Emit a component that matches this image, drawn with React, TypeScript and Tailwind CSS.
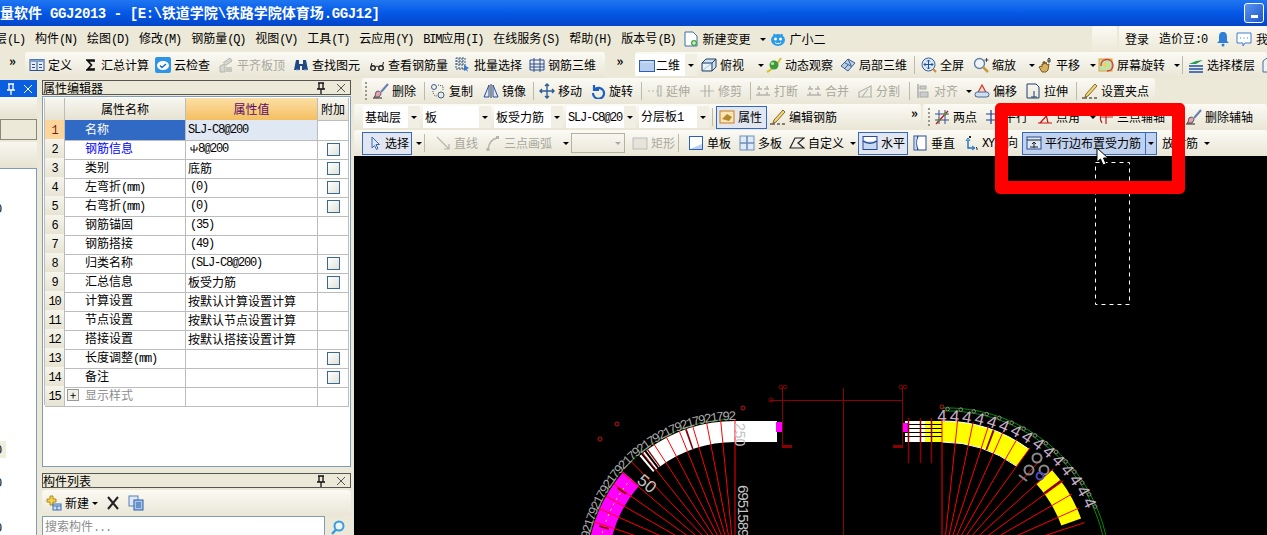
import type { ReactNode } from "react";

const S = ({ children }: { children: ReactNode }) => (
  <svg viewBox="0 0 16 16" className="h-4 w-4 shrink-0" fill="none">
    {children}
  </svg>
);

function T({ s, latin = "tracking-[-0.1em]" }: { s: string; latin?: string }) {
  return (
    <>
      {s.split(/([\x00-\xff]+)/).map((p, i) =>
        i % 2 ? (
          <span key={i} className={`font-['Liberation_Mono',monospace] ${latin}`}>
            {p}
          </span>
        ) : (
          p
        ),
      )}
    </>
  );
}

const icons: Record<string, ReactNode> = {
  define: <><rect x="1" y="2.500" width="14" height="11" fill="#e4ecf7" stroke="#2c4f86" /><rect x="1" y="2.500" width="14" height="2.500" fill="#7f9fd0" /><path d="M8 5v8M3 7.500h3M3 10.500h3M10 7.500h3M10 10.500h3" stroke="#2c4f86" /></>,
  sigma: <path d="M4 3h8v2M11 4H6l3.500 4L6 12h5M12 11v2H4" stroke="#111" strokeWidth="1.700" />,
  cloud: <><rect x="0" y="0" width="16" height="16" rx="2" fill="#2f93e6" /><ellipse cx="8" cy="8.500" rx="6" ry="4.500" fill="#fff" /><path d="M5 8.500l2 2 4-3.500" stroke="#1c6fc4" strokeWidth="1.500" /></>,
  flush: <><path d="M2 15V9l5-2v8zM5 6l7-5 2 3-6 4" fill="#d6d6ce" stroke="#b5b5ad" /><path d="M8 15V10h6v5z" fill="#c8c8c0" /></>,
  binoc: <><path d="M3 3h3v4h4V3h3l2 10H9V9H7v4H1z" fill="#1f4a86" /><path d="M3 13h3M11 13h3" stroke="#8fb2e0" /></>,
  glasses: <><circle cx="4" cy="11" r="2.300" stroke="#222" strokeWidth="1.400" /><circle cx="12" cy="11" r="2.300" stroke="#222" strokeWidth="1.400" /><path d="M6.500 10c1-1 2-1 3 0M13.500 9l1-4M2 9l1-3" stroke="#222" /></>,
  batch: <><path d="M1 1h9v11H1zM1 4h9M1 7h9M4 1v11M7 1v11" stroke="#35547f" strokeDasharray="2 1" /><path d="M9 8l5 3-2 1 1 3-2-2-2 1z" fill="#3a78c8" /></>,
  grid3d: <path d="M1 3h14v10H1zM5 1v14M11 1v14M1 7h14M1 10h14" stroke="#2a4d96" />,
  rect2d: <><rect x="0.500" y="3.500" width="15" height="11" fill="#b6cdf0" stroke="#2e5fb0" /><path d="M2 5h12" stroke="#dfe9f8" /></>,
  box: <><path d="M1 6l4-4h10v8l-4 4H1z" fill="#cfe2f3" stroke="#25405f" /><path d="M1 6h10v8M11 6l4-4" stroke="#25405f" /><path d="M2 7h8v6H2z" fill="#eaf3fa" /><path d="M2 13l8-6" stroke="#9fc0de" /></>,
  orbit: <><path d="M1 15C5 13 12 7 15 1" stroke="#d8c03a" strokeWidth="2" /><circle cx="8" cy="8" r="4.500" fill="#3f9b3a" /><circle cx="6.500" cy="6.500" r="1.600" fill="#b7e6a8" /></>,
  local3d: <><path d="M1 9l7-7 7 4-7 8z" fill="#b9cfe8" stroke="#3f5f8d" /><path d="M4.500 5.500l7 4M8 2l3.500 7.500M4.500 11.500L8 8" stroke="#3f5f8d" /></>,
  full: <><circle cx="7.500" cy="7.500" r="6.500" fill="#dce8f6" stroke="#3c5f8a" /><path d="M7.500 3v9M3 7.500h9" stroke="#1c4fa0" /><path d="M6 4.500l1.500-1.500 1.500 1.500M6 10.500l1.500 1.500 1.500-1.500M4.500 6L3 7.500 4.500 9M10.500 6L12 7.500 10.500 9" stroke="#1c4fa0" /><path d="M12 12l3 3" stroke="#c88a30" strokeWidth="2" /></>,
  zoom: <><circle cx="6.500" cy="6.500" r="5" fill="#eef3fa" stroke="#5f7fa8" strokeWidth="1.400" /><path d="M10 10l5 5" stroke="#c89a3a" strokeWidth="2.500" /><path d="M13.500 1v4M11.500 3h4" stroke="#444" /></>,
  hand: <><path d="M2 10l2-1 1 1V7l1 1V5l1 2V4l1 3 1-2 1 3 2-1-1 6-2 2H5z" fill="#d8b060" stroke="#7a5a20" /><path d="M12 1v5M10.500 2.500L12 1l1.500 1.500M10 4h4" stroke="#333" /></>,
  screen: <><rect x="1" y="2" width="13" height="12" fill="#bfe3b0" stroke="#d9a030" /><path d="M3 9c-1-8 11-9 12-1 0 4-3 6-6 6" stroke="#e23a32" strokeWidth="1.400" /><circle cx="7" cy="8" r="2" fill="#f5d24a" /></>,
  floors: <><path d="M1 7l7-3 7-1-7 4z" fill="#2a9b52" /><path d="M1 9h14M1 12h14M1 15h14" stroke="#1c4fa0" strokeWidth="1.500" /></>,
  tile: <path d="M1 4l4-3h9v10l-4 4H1z" fill="#eef3f8" stroke="#4a6a90" />,
  brush: <><path d="M15 1L8 9" stroke="#6a7fb0" strokeWidth="2" /><path d="M3 9c3-2 5 0 5 2l-2 3H1c2-1 1-3 2-5z" fill="#e8a0b8" stroke="#555" /><path d="M0 15h9" stroke="#222" /></>,
  copy: <><circle cx="4" cy="4" r="2.500" stroke="#3a5f90" /><circle cx="11" cy="12" r="3" stroke="#3a5f90" /><path d="M8 2l5 1 0 4M3 8c0 3 1 5 4 5" stroke="#555" strokeDasharray="1 1" /></>,
  mirror: <><path d="M8 1v14" stroke="#333" /><path d="M6 2v12H1z" fill="#dfe8f8" stroke="#2a4d96" /><path d="M10 2v12h5z" fill="#dfe8f8" stroke="#2a4d96" /></>,
  move: <path d="M8 1v14M1 8h14M6 3l2-2 2 2M6 13l2 2 2-2M3 6L1 8l2 2M13 6l2 2-2 2" stroke="#2e5d96" strokeWidth="1.400" />,
  rotate: <path d="M4 2v5h5M4.500 6.500A5.500 5.500 0 1 1 3 10" stroke="#1c5fc0" strokeWidth="2.200" />,
  extend: <path d="M1 8h2M5 8h2M9 8h2M11 3h3v10h-3z" stroke="#b5b5ad" strokeWidth="1.200" />,
  trim: <path d="M1 8h14M6 2v12M10 2v12" stroke="#b5b5ad" strokeWidth="1.200" />,
  cut: <path d="M2 6h5M9 6h5M1 12h14M4 3v3M12 3v3M4 9v3M12 9v3" stroke="#b5b5ad" strokeWidth="1.500" />,
  split: <path d="M1 14h14M2 14V9l12-6v11M5 14l6-8" stroke="#b5b5ad" strokeWidth="1.200" />,
  align: <><path d="M3 1v14" stroke="#aaa" strokeWidth="1.500" /><rect x="5" y="3" width="6" height="3" fill="#ccc" stroke="#aaa" /><rect x="5" y="9" width="8" height="5" fill="#ccc" stroke="#aaa" /></>,
  offset: <><path d="M8 2l6 11H2z" fill="#f4d8d0" stroke="#d23b2e" strokeWidth="1.300" /><rect x="1" y="9" width="14" height="5" rx="2.500" fill="#cfdff0" stroke="#476a98" /></>,
  stretch: <path d="M2 1h9l3 3v11H2zM9 8v6M6 14h6" stroke="#1f3f70" />,
  pen: <><path d="M4 11L13 1l2 2-9 10-3 1z" fill="#f0d680" stroke="#8a6a20" /><path d="M0 15h5M7 15h3M12 15h3" stroke="#111" /></>,
  attr: <><rect x="1" y="2" width="14" height="12" fill="#fde4b4" stroke="#c87f20" /><path d="M3 10l5-5 5 3-3 4z" fill="#b08a30" /></>,
  two: <><path d="M5 1v14M11 1v14M1 5h14M1 11h14" stroke="#3a4f90" /><path d="M2 15L14 2" stroke="#d01010" strokeWidth="1.300" /><circle cx="5" cy="11" r="1.500" fill="#3a9b3a" /><circle cx="11" cy="5" r="1.500" fill="#3a9b3a" /></>,
  par: <path d="M1 5h14M1 11h14M6 1v14" stroke="#1f3f90" strokeWidth="1.200" />,
  angle: <path d="M1 14h14M3 14L14 2M9 5l2 9" stroke="#d01010" strokeWidth="1.200" />,
  three: <path d="M8 1v14M2 8h13M4 4c-2 3-2 7 0 10" stroke="#c01818" strokeWidth="1.200" />,
  cursor: <path d="M5 2v11l2.500-2.500 2 4 1.500-1-2-4h3.500z" fill="#dfe8f8" stroke="#3a66b0" />,
  line: <path d="M2 2l12 12M14 9v5H9" stroke="#b5b5ad" strokeWidth="1.200" />,
  arc: <><path d="M3 14C4 8 7 4 12 3" stroke="#b5b5ad" strokeWidth="1.500" /><rect x="11" y="1" width="3" height="3" fill="#b5b5ad" /><rect x="1.500" y="13" width="3" height="3" fill="#b5b5ad" /></>,
  rectGrey: <rect x="1" y="3" width="14" height="11" fill="#e6e4d8" stroke="#bbb" />,
  single: <><rect x="1.500" y="1.500" width="13" height="13" fill="#fff" stroke="#2e5fb0" /><path d="M2 14h12V9z" fill="#b9cff0" /></>,
  multi: <><rect x="1" y="1" width="14" height="14" fill="#dfeaf8" stroke="#6f8fb8" /><path d="M8 1v14M1 8h14" stroke="#6f8fb8" strokeWidth="1.600" /></>,
  custom: <path d="M1 13L6 3h9L9 8l6 5z" stroke="#222" strokeWidth="1.200" />,
  horiz: <><rect x="1" y="1.500" width="14" height="13" fill="#c9d9f0" stroke="#2a4d96" /><path d="M1 6c4 3 10 3 14 0" stroke="#2a4d96" strokeWidth="1.500" /><path d="M2 2h12v3c-4 2-8 2-12 0z" fill="#fff" /></>,
  vert: <><rect x="2" y="1" width="12" height="14" fill="#fff" stroke="#2a4d96" /><path d="M6 1c-2 4-2 10 0 14" stroke="#2a4d96" strokeWidth="1.500" /><path d="M3 2h2c-1 4-1 8 0 12H3z" fill="#c9d9f0" /></>,
  xy: <><path d="M5 5v8h6" stroke="#1c6fc4" strokeWidth="1.400" /><path d="M3 6l2-3 2 3M9 11l3 2-3 2" stroke="#1c6fc4" /><path d="M6 1l2 2M8 1L6 3M13 12l1 1v2" stroke="#222" /></>,
  parallel: <><rect x="1" y="2" width="14" height="12" fill="#dce8f6" stroke="#2a4d96" /><path d="M1 5h14M8 13V7M6 9l2-2 2 2M4 12h8" stroke="#222" /></>,
  file: <><path d="M2 1h8l4 4v10H2z" fill="#fff" stroke="#3a6fb0" /><circle cx="11" cy="12" r="3" fill="#3da63d" /><path d="M11 10v4M9 12h4" stroke="#fff" /></>,
  robot: <><ellipse cx="8" cy="9" rx="7" ry="6" fill="#2c9be8" /><path d="M4 3l1 3M12 3l-1 3" stroke="#2c9be8" strokeWidth="2" /><circle cx="5.500" cy="8" r="1.500" fill="#fff" /><circle cx="10.500" cy="8" r="1.500" fill="#fff" /><path d="M5 11.500c2 1.500 4 1.500 6 0" stroke="#fff" /></>,
  bell: <><path d="M8 1c3 0 4 2 4 5v4l2 2H2l2-2V6c0-3 1-5 4-5z" fill="#2f7fd8" /><circle cx="8" cy="14" r="1.500" fill="#2f7fd8" /></>,
  chat: <><path d="M1 2h14v10H9l-2 3v-3H1z" fill="#fff" stroke="#3a7fd0" /><path d="M4 7h1M7.500 7h1M11 7h1" stroke="#3a7fd0" /></>,
  newItem: <><path d="M4 1h3v3h3v3H7v3H4V7H1V4h3z" fill="#f5d24a" stroke="#b08a20" /><rect x="7" y="9" width="8" height="6" fill="#cfe0f5" stroke="#3a6fb0" /><path d="M7 11h8M11 11v4" stroke="#3a6fb0" /></>,
  paste: <><rect x="1" y="1" width="9" height="10" fill="#dfe8f8" stroke="#5a80b8" /><rect x="6" y="5" width="9" height="10" fill="#a8c4ec" stroke="#2a5fa8" /><path d="M8 8h5M8 10h5M8 12h5" stroke="#2a5fa8" /></>,
};

function Caret() {
  return <span className="ml-auto mr-[2px] h-0 w-0 shrink-0 border-x-[3px] border-t-[3px] border-x-transparent border-t-black" />;
}

function Tool({ icon, label, w, off, caret }: { icon: string; label: string; w: string; off?: boolean; caret?: boolean }) {
  return (
    <div className={`flex h-full shrink-0 items-center gap-[3px] whitespace-nowrap ${w} ${off ? "text-[#a9a89c]" : "text-black"}`}>
      <S>{icons[icon]}</S>
      <span><T s={label} /></span>
      {caret && <Caret />}
    </div>
  );
}

function Sep({ w }: { w: string }) {
  return (
    <div className={`flex h-full shrink-0 items-center ${w}`}>
      <div className="h-[18px] w-px bg-[#bdbaa8]" />
    </div>
  );
}

const Grip = ({ w }: { w: string }) => (
  <div className={`flex shrink-0 flex-col gap-[2px] ${w}`}>
    {[0, 1, 2, 3, 4].map((i) => <div key={i} className="h-[2px] w-[2px] bg-[#9b9886]" />)}
  </div>
);

function Combo({ label, w }: { label: string; w: string }) {
  return (
    <div className={`flex h-[22px] shrink-0 items-center overflow-hidden whitespace-nowrap bg-white pl-[2px] ${w}`}>
      <span className="min-w-0 flex-1 overflow-hidden"><T s={label} /></span>
      <span className="flex h-full w-[12px] shrink-0 items-center justify-center bg-[#f1efe4]">
        <span className="h-0 w-0 border-x-[3px] border-t-[3px] border-x-transparent border-t-black" />
      </span>
    </div>
  );
}

const band = "flex items-center rounded-[3px] bg-linear-to-b from-[#fbfaf4] to-[#e9e6d6]";

function Chevron() {
  return <span className="-translate-y-[5px] text-[13px] font-bold leading-none text-black">»</span>;
}

function PanelHead({ title, w }: { title: string; w: string }) {
  return (
    <div className={`flex h-[15px] shrink-0 items-center border border-[#555] bg-[#ece9d8] ${w}`}>
      <span className="leading-none"><T s={title} /></span>
      <svg viewBox="0 0 12 12" className="ml-auto mr-[9px] h-3 w-3"><path d="M3 1h6M4 1v6h4V1M2 7h8M6 7v5" stroke="#111" strokeWidth="1.300" fill="none" /></svg>
      <svg viewBox="0 0 10 10" className="mr-[4px] h-[10px] w-[10px]"><path d="M1 1l8 8M9 1l-8 8" stroke="#555" fill="none" /></svg>
    </div>
  );
}

const rows: [string, string, boolean][] = [
  ["名称", "SLJ-C8@200", false],
  ["钢筋信息", "8@200", true],
  ["类别", "底筋", true],
  ["左弯折(mm)", "(0)", true],
  ["右弯折(mm)", "(0)", true],
  ["钢筋锚固", "(35)", false],
  ["钢筋搭接", "(49)", false],
  ["归类名称", "(SLJ-C8@200)", true],
  ["汇总信息", "板受力筋", true],
  ["计算设置", "按默认计算设置计算", false],
  ["节点设置", "按默认节点设置计算", false],
  ["搭接设置", "按默认搭接设置计算", false],
  ["长度调整(mm)", "", true],
  ["备注", "", true],
  ["显示样式", "", false],
];

function PropTable() {
  return (
    <div className="ml-px mt-px w-[305px] border-l border-[#bcbcbc]">
      <div className="grid h-[22px] grid-cols-[20px_121px_132px_31px] text-center leading-[22px]">
        <div className="border-b border-r border-[#bcbcbc] bg-linear-to-b from-[#f8f7f0] to-[#e6e3d2]" />
        <div className="border-b border-r border-[#bcbcbc] bg-linear-to-b from-[#f8f7f0] to-[#e6e3d2]">属性名称</div>
        <div className="border-b border-r border-[#bcbcbc] bg-linear-to-b from-[#fbdfa4] to-[#f4bf5f] text-[#5b0a6b]">属性值</div>
        <div className="border-b border-r border-[#bcbcbc] bg-linear-to-b from-[#f8f7f0] to-[#e6e3d2]">附加</div>
      </div>
      {rows.map(([name, val, check], i) => (
        <div key={name} className="grid h-[19px] grid-cols-[20px_121px_132px_31px] leading-[18px]">
          <div className={`border-b border-r border-[#bcbcbc] text-center ${i === 0 ? "bg-[#fdd49a] text-[#7a1a1a]" : "bg-linear-to-b from-[#f6f5ec] to-[#e6e3d2]"}`}>
            <T s={String(i + 1)} />
          </div>
          <div className={`relative border-b border-r border-[#bcbcbc] pl-[20px] ${i === 0 ? "bg-[#316ac5] text-white" : i === 1 ? "text-[#0000ff]" : i === 14 ? "text-[#8d8d8d]" : ""}`}>
            {i === 14 && (
              <span className="absolute left-[2px] top-[3px] flex h-[12px] w-[12px] items-center justify-center border border-[#999] bg-[#f0efe6] text-[11px] leading-none text-black">+</span>
            )}
            <T s={name} />
          </div>
          <div className={`flex items-center whitespace-pre border-b border-r border-[#bcbcbc] ${val.startsWith("(") ? "pl-[4px]" : "pl-[2px]"} ${i === 0 ? "bg-[#e0e8f4]" : ""}`}>
            {i === 1 && (
              <svg viewBox="0 0 8 10" className="ml-[2px] h-[10px] w-[8px]"><path d="M1 3v3h6V3M4 1v8" stroke="#111" fill="none" /></svg>
            )}
            <T s={val} />
          </div>
          <div className="flex items-center justify-center border-b border-r border-[#bcbcbc]">
            {check && <div className="h-[13px] w-[13px] border border-[#3b6a8f] bg-linear-to-br from-white to-[#e2e2da]" />}
          </div>
        </div>
      ))}
    </div>
  );
}

function polar(cx: number, cy: number, r: number, deg: number) {
  const a = (deg * Math.PI) / 180;
  return [cx + r * Math.sin(a), cy - r * Math.cos(a)];
}

function arc(cx: number, cy: number, r: number, a: number, b: number) {
  const [x1, y1] = polar(cx, cy, r, a);
  const [x2, y2] = polar(cx, cy, r, b);
  return `M${x1} ${y1}A${r} ${r} 0 0 ${b > a ? 1 : 0} ${x2} ${y2}`;
}

const range = (from: number, to: number, step: number) => {
  const out: number[] = [];
  for (let v = from; step > 0 ? v <= to : v >= to; v += step) out.push(v);
  return out;
};

function Radials({ cx, angles }: { cx: number; angles: number[] }) {
  return (
    <>
      {angles.map((d) => {
        const [x1, y1] = polar(cx, 569, 150, d);
        const [x2, y2] = polar(cx, 569, 20, d);
        return <line key={d} x1={x1} y1={y1} x2={x2} y2={y2} stroke="#ff0000" />;
      })}
    </>
  );
}

// the outer rings on the right drift outward a little as they go round
const drift = (d: number, base: number, k: number) => polar(942, 569, base + d * k, d);

function Drawing() {
  const cl = 735;
  const cr = 942;
  const green = (base: number) =>
    "M" + range(0, 82, 2).map((d) => drift(d, base, 0.08).join(" ")).join("L");
  return (
    <svg viewBox="354 156 913 379" className="h-full w-full">
      <rect x="1095.5" y="162.5" width="34" height="142" fill="none" stroke="#fff" strokeDasharray="4 4" />

      {/* centre grid */}
      <g stroke="#8b0000" fill="none">
        <path d="M782.5 388v59M902.5 388v59M843.5 388V535M770 400.5H902" />
        <circle cx="781" cy="387" r="1.800" />
        <circle cx="785" cy="387" r="1.800" />
        <circle cx="901" cy="387" r="1.800" />
        <circle cx="905" cy="387" r="1.800" />
        <circle cx="771" cy="400" r="2" />
        <path d="M782 446.5h10M893 446.5h10" strokeWidth="3" />
        <circle cx="600" cy="439" r="2" stroke="#d01010" />
        <circle cx="617" cy="424" r="2" stroke="#d01010" />
        <circle cx="743" cy="408" r="2" stroke="#d01010" />
        <circle cx="942" cy="407" r="2" stroke="#d01010" />
      </g>

      {/* left arc */}
      <rect x="735" y="421" width="42" height="21" fill="#fff" />
      <rect x="776" y="422" width="6" height="10" fill="#ff00ff" />
      <path d={arc(cl, 569, 137.5, 0, -36)} stroke="#fff" strokeWidth="21" fill="none" />
      <path d={arc(cl, 569, 137.5, -36, -41)} stroke="#fff" strokeWidth="21" strokeDasharray="2 2" fill="none" />
      <path d={arc(cl, 569, 137.5, -49, -85)} stroke="#ff00ff" strokeWidth="21" fill="none" />
      <path d={arc(cl, 569, 137.5, -49, -85)} stroke="#ffff00" strokeDasharray="2 4" fill="none" />
      <Radials cx={cl} angles={range(0, -88, -5.5)} />
      <path d={arc(cl, 569, 137.5, -19, -19.7)} stroke="#8b0000" strokeWidth="21" fill="none" />
      <path d={arc(cl, 569, 137.5, -36, -36.5)} stroke="#8b0000" strokeWidth="21" fill="none" />
      <path d={arc(cl, 569, 137.5, -55, -55.8)} stroke="#8b0000" strokeWidth="10" fill="none" />
      <path d={arc(cl, 569, 137.5, -72, -72.8)} stroke="#8b0000" strokeWidth="10" fill="none" />
      <path d={arc(cl, 569, 150, -2, -85)} stroke="#007000" fill="none" />
      <g fill="#a8a8a8" fontSize="13" fontFamily="'Liberation Mono',monospace">
        {range(-1, -86, -2.3).map((d, i) => {
          const [x, y] = polar(cl, 569, 149, d);
          return <text key={d} x={x} y={y} textAnchor="middle" transform={`rotate(${d} ${x} ${y})`}>{"2971"[i % 4]}</text>;
        })}
      </g>
      <g fill="#c4c4c4" fontFamily="'Liberation Sans',sans-serif">
        <text x="735" y="423" fontSize="14" transform="rotate(90 735 423)">250</text>
        <text x="738" y="485" fontSize="15" letterSpacing="-1" transform="rotate(90 738 485)">6951589</text>
        <text x="636" y="482" fontSize="17" transform="rotate(40 636 482)">50</text>
      </g>

      {/* right arc */}
      <rect x="905" y="421" width="37" height="21" fill="#fff" />
      <rect x="925" y="421" width="17" height="21" fill="#ffff00" />
      <path d="M905 424.5h37M905 428.5h37M905 432.5h37M905 436.5h37" stroke="#000" />
      <rect x="903" y="423" width="6" height="9" fill="#ff00ff" />
      <path d="M908.5 418v45M920.5 418v45M931.5 418v45" stroke="#8b0000" strokeWidth="1.500" />
      <path d={arc(cr, 569, 137.5, 0, 36)} stroke="#ffff00" strokeWidth="21" fill="none" />
      <path d={arc(cr, 569, 137.5, 48, 70)} stroke="#ffff00" strokeWidth="21" fill="none" />
      <path d={arc(cr, 569, 148, 0, 36)} stroke="#fff" fill="none" />
      <path d={arc(cr, 569, 127, 0, 36)} stroke="#fff" fill="none" />
      <Radials cx={cr} angles={range(0, 80, 6)} />
      <path d={arc(cr, 569, 137.5, 20, 20.8)} stroke="#8b0000" strokeWidth="21" fill="none" />
      <path d={arc(cr, 569, 137.5, 53, 54)} stroke="#8b0000" strokeWidth="21" fill="none" />
      <path d={green(158)} stroke="#009000" fill="none" />
      <path d={green(161)} stroke="#009000" fill="none" />
      <g fill="#c8aecb" fontSize="17" fontFamily="'Liberation Sans',sans-serif">
        {range(0, 66, 4.7).map((d) => {
          const [x, y] = drift(d, 147, 0.14);
          return <text key={d} x={x} y={y} textAnchor="middle" transform={`rotate(${d} ${x} ${y})`}>4</text>;
        })}
      </g>
      <g stroke="#888" fill="none">
        {range(2, 72, 4.7).map((d) => {
          const [x, y] = drift(d, 160, 0.08);
          return <circle key={d} cx={x} cy={y} r="1.800" />;
        })}
      </g>
      <g fill="none" stroke="#8a8a8a" strokeWidth="2">
        <circle cx="1037" cy="458" r="4.500" />
        <circle cx="1029" cy="470" r="4.500" />
        <circle cx="1044" cy="470" r="4.500" />
        <circle cx="1040" cy="476" r="3.500" stroke="#4a4ac0" />
        <path d="M1019 475l8 6" />
      </g>
    </svg>
  );
}

export default function App() {
  return (
    <div className="relative flex h-[535px] w-[1267px] flex-col overflow-hidden bg-[#ece9d8] font-['Noto_Sans_CJK_SC',sans-serif] text-[12px] text-black">
      {/* title bar */}
      <div className="flex h-[26px] shrink-0 items-center bg-linear-to-b from-[#1f76f0] via-[#0558e6] to-[#0445c8] text-[14px] font-bold text-white">
        <span className="whitespace-pre"><T s="量软件 GGJ2013 - [E:\铁道学院\铁路学院体育场.GGJ12]" latin="tracking-[-0.03em]" /></span>
        <div className="ml-auto mr-[3px] flex h-[20px] w-[20px] items-end justify-center rounded-[3px] border border-white bg-linear-to-br from-[#5b94f0] to-[#1c56c8] pb-[4px]">
          <div className="h-[3px] w-[7px] bg-white" />
        </div>
      </div>

      {/* menu bar */}
      <div className="flex h-[26px] shrink-0 items-center whitespace-nowrap">
        <div className="-ml-[5px] flex gap-[10px]">
          {["层(L)", "构件(N)", "绘图(D)", "修改(M)", "钢筋量(Q)", "视图(V)", "工具(T)", "云应用(Y)", "BIM应用(I)", "在线服务(S)", "帮助(H)", "版本号(B)"].map((m) => (
            <span key={m}><T s={m} /></span>
          ))}
        </div>
        <div className="ml-[8px] w-[85px]"><Tool icon="file" label="新建变更" w="w-[85px]" caret /></div>
        <div className="ml-[2px]"><Tool icon="robot" label="广小二" w="w-[60px]" /></div>
        <div className="ml-auto h-full w-[25px] rounded-[3px] bg-linear-to-b from-[#fbfaf4] to-[#ece9d8]" />
        <div className="ml-[2px] flex h-full w-[148px] items-center rounded-[3px] bg-linear-to-b from-[#fbfaf4] to-[#ece9d8] pl-[6px]">
          <span>登录</span>
          <span className="ml-[10px]"><T s="造价豆:0" /></span>
          <div className="ml-[8px]"><S>{icons.bell}</S></div>
          <div className="ml-[5px]"><S>{icons.chat}</S></div>
          <span className="ml-[4px]">我</span>
        </div>
      </div>

      {/* toolbar row 1 */}
      <div className="flex h-[26px] shrink-0 items-center">
        <div className="flex w-[25px] justify-center"><Chevron /></div>
        <div className={`${band} h-full w-[580px] pl-[4px]`}>
          <Tool icon="define" label="定义" w="w-[53px]" />
          <Tool icon="sigma" label="汇总计算" w="w-[73px]" />
          <Tool icon="cloud" label="云检查" w="w-[63px]" />
          <Tool icon="flush" label="平齐板顶" w="w-[75px]" off />
          <Tool icon="binoc" label="查找图元" w="w-[76px]" />
          <Tool icon="glasses" label="查看钢筋量" w="w-[86px]" />
          <Tool icon="batch" label="批量选择" w="w-[74px]" />
          <Tool icon="grid3d" label="钢筋三维" w="w-[72px]" />
        </div>
        <div className="flex w-[30px] justify-center"><Chevron /></div>
        <div className={`${band} h-full flex-1 overflow-hidden`}>
          <div className="flex h-[22px] w-[62px] shrink-0 items-center gap-[1px] bg-white pl-[4px]">
            <S>{icons.rect2d}</S>
            <span>二维</span>
            <span className="ml-auto flex h-full w-[12px] items-center justify-center bg-[#f1efe4]">
              <span className="h-0 w-0 border-x-[3px] border-t-[3px] border-x-transparent border-t-black" />
            </span>
          </div>
          <div className="w-[4px] shrink-0" />
          <Tool icon="box" label="俯视" w="w-[65px]" caret />
          <Tool icon="orbit" label="动态观察" w="w-[74px]" />
          <Tool icon="local3d" label="局部三维" w="w-[74px]" />
          <Sep w="w-[7px]" />
          <Tool icon="full" label="全屏" w="w-[52px]" />
          <Tool icon="zoom" label="缩放" w="w-[64px]" caret />
          <Tool icon="hand" label="平移" w="w-[61px]" caret />
          <Tool icon="screen" label="屏幕旋转" w="w-[84px]" caret />
          <Sep w="w-[6px]" />
          <Tool icon="floors" label="选择楼层" w="w-[74px]" />
          <S>{icons.tile}</S>
        </div>
      </div>

      {/* body */}
      <div className="flex min-h-0 flex-1">
        {/* left panels */}
        <div className="flex w-[354px] shrink-0">
          <div className="mt-[2px] flex w-[37px] shrink-0 flex-col">
            <div className="flex h-[17px] shrink-0 items-center justify-end gap-[6px] bg-[#0a5fe0] pr-[4px]">
              <svg viewBox="0 0 12 12" className="h-3 w-3"><path d="M3 1h6M4 1v6h4V1M2 7h8M6 7v5" stroke="#fff" strokeWidth="1.300" fill="none" /></svg>
              <svg viewBox="0 0 10 10" className="h-[10px] w-[10px]"><path d="M1 1l8 8M9 1l-8 8" stroke="#fff" fill="none" /></svg>
            </div>
            <div className="h-[21px] shrink-0 bg-linear-to-b from-[#f8f7f0] to-[#e6e3d2]" />
            <div className="mt-px h-[21px] shrink-0 border border-[#8a8878] bg-[#ece9d8]" />
            <div className="mt-[2px] h-[26px] shrink-0 bg-linear-to-b from-[#f8f7f0] to-[#e6e3d2]" />
            <div className="relative min-h-0 flex-1 border-r border-t border-[#7f9db9] bg-white">
              <span className="absolute -left-[5px] top-[30px]"><T s="0" /></span>
              <span className="absolute left-0 top-[272px] h-[17px] w-[6px] bg-[#f0eedd]" />
              <span className="absolute -left-[5px] top-[271px]"><T s="0" /></span>
              <span className="absolute -left-[5px] top-[304px]"><T s="0" /></span>
              <span className="absolute -left-[5px] top-[349px]"><T s="0" /></span>
            </div>
          </div>

          <div className="ml-[5px] mt-[2px] flex w-[309px] shrink-0 flex-col">
            <PanelHead title="属性编辑器" w="w-[309px]" />
            <div className="mt-px h-[371px] shrink-0 border border-[#7f9db9] bg-white">
              <PropTable />
            </div>
            <div className="mt-[6px]"><PanelHead title="构件列表" w="w-[309px]" /></div>
            <div className="mt-[2px] flex h-[26px] shrink-0 items-center rounded-[4px] bg-linear-to-b from-[#fbfaf4] to-[#e9e6d6] pl-[4px]">
              <S>{icons.newItem}</S>
              <span className="ml-[3px]">新建</span>
              <span className="ml-[3px] h-0 w-0 border-x-[3px] border-t-[3px] border-x-transparent border-t-black" />
              <svg viewBox="0 0 14 14" className="ml-[8px] h-[14px] w-[14px]"><path d="M2 1l10 12M12 1L2 13" stroke="#222" strokeWidth="2" fill="none" /></svg>
              <div className="ml-[8px]"><S>{icons.paste}</S></div>
            </div>
            <div className="flex h-[19px] shrink-0 items-start">
              <div className="h-[30px] w-[283px] border border-[#7f9db9] bg-white pl-[2px] text-[#8d8d8d]"><T s="搜索构件..." /></div>
              <svg viewBox="0 0 16 16" className="ml-[5px] mt-[3px] h-4 w-4"><circle cx="9" cy="7" r="4.500" fill="#eaf4fd" stroke="#3a9be0" strokeWidth="2" /><path d="M6 10.500L2 15" stroke="#3a9be0" strokeWidth="2.500" /></svg>
            </div>
          </div>
        </div>

        {/* right */}
        <div className="flex min-w-0 flex-1 flex-col">
          <div className="flex h-[26px] shrink-0 pl-[8px]">
            <div className={`${band} h-full w-[793px] shrink-0 pl-[3px]`}>
              <Grip w="w-[8px]" />
              <Tool icon="brush" label="删除" w="w-[51px]" />
              <Sep w="w-[6px]" />
              <Tool icon="copy" label="复制" w="w-[53px]" />
              <Tool icon="mirror" label="镜像" w="w-[50px]" />
              <Sep w="w-[6px]" />
              <Tool icon="move" label="移动" w="w-[51px]" />
              <Tool icon="rotate" label="旋转" w="w-[51px]" />
              <Sep w="w-[6px]" />
              <Tool icon="extend" label="延伸" w="w-[52px]" off />
              <Tool icon="trim" label="修剪" w="w-[51px]" off />
              <Sep w="w-[5px]" />
              <Tool icon="cut" label="打断" w="w-[51px]" off />
              <Tool icon="cut" label="合并" w="w-[51px]" off />
              <Tool icon="split" label="分割" w="w-[52px]" off />
              <Sep w="w-[6px]" />
              <Tool icon="align" label="对齐" w="w-[59px]" off caret />
              <Tool icon="offset" label="偏移" w="w-[51px]" />
              <Tool icon="stretch" label="拉伸" w="w-[51px]" />
              <Sep w="w-[6px]" />
              <Tool icon="pen" label="设置夹点" w="w-[73px]" />
            </div>
          </div>

          <div className="flex h-[26px] shrink-0">
            <div className={`${band} h-full w-[567px] shrink-0 gap-[3px] pl-[9px]`}>
              <Combo label="基础层" w="w-[57px]" />
              <Combo label="板" w="w-[68px]" />
              <Combo label="板受力筋" w="w-[69px]" />
              <Combo label="SLJ-C8@20" w="w-[70px]" />
              <Combo label="分层板1" w="w-[70px]" />
              <Sep w="w-[1px]" />
              <div className="flex h-[23px] w-[51px] shrink-0 items-center gap-[3px] border border-[#316ac5] bg-[#e1e6f0] pl-[2px]">
                <S>{icons.attr}</S>
                <span>属性</span>
              </div>
              <Tool icon="pen" label="编辑钢筋" w="w-[138px]" />
              <Chevron />
            </div>
            <div className={`${band} ml-[2px] h-full flex-1 overflow-hidden pl-[5px]`}>
              <Grip w="w-[6px]" />
              <Tool icon="two" label="两点" w="w-[51px]" />
              <Tool icon="par" label="平行" w="w-[52px]" />
              <Tool icon="angle" label="点角" w="w-[61px]" caret />
              <Tool icon="three" label="三点辅轴" w="w-[88px]" />
              <Tool icon="brush" label="删除辅轴" w="w-[74px]" />
            </div>
          </div>

          <div className={`${band} h-[26px] shrink-0 pl-[8px]`}>
            <div className="flex h-[23px] w-[50px] shrink-0 items-center gap-[2px] border border-[#316ac5] bg-[#e1e6f0] pl-[4px]">
              <S>{icons.cursor}</S>
              <span>选择</span>
            </div>
            <div className="flex w-[12px] shrink-0 justify-center"><Caret /></div>
            <Sep w="w-[11px]" />
            <Tool icon="line" label="直线" w="w-[50px]" off />
            <Tool icon="arc" label="三点画弧" w="w-[86px]" off caret />
            <div className="flex h-[20px] w-[54px] shrink-0 items-center justify-end border border-[#b5b39f] pr-[3px]">
              <span className="h-0 w-0 border-x-[3px] border-t-[3px] border-x-transparent border-t-[#aaa]" />
            </div>
            <div className="w-[7px] shrink-0" />
            <Tool icon="rectGrey" label="矩形" w="w-[46px]" off />
            <Sep w="w-[10px]" />
            <Tool icon="single" label="单板" w="w-[51px]" />
            <Tool icon="multi" label="多板" w="w-[50px]" />
            <Tool icon="custom" label="自定义" w="w-[69px]" caret />
            <div className="flex h-[23px] w-[50px] shrink-0 items-center gap-[3px] border border-[#316ac5] bg-[#e1e6f0] pl-[3px]">
              <S>{icons.horiz}</S>
              <span>水平</span>
            </div>
            <div className="w-[4px] shrink-0" />
            <Tool icon="vert" label="垂直" w="w-[51px]" />
            <Tool icon="xy" label="XY方向" w="w-[59px]" />
            <div className="flex h-[23px] w-[135px] shrink-0 items-center border border-[#316ac5] bg-[#c1d2ee] pl-[3px]">
              <S>{icons.parallel}</S>
              <span className="ml-[3px] whitespace-nowrap">平行边布置受力筋</span>
              <div className="ml-auto flex h-full w-[11px] items-center justify-center border-l border-[#316ac5]">
                <span className="h-0 w-0 border-x-[3px] border-t-[3px] border-x-transparent border-t-black" />
              </div>
            </div>
            <span className="ml-[5px] whitespace-nowrap">放射筋</span>
            <span className="ml-[6px] h-0 w-0 border-x-[3px] border-t-[3px] border-x-transparent border-t-black" />
          </div>

          <div className="min-h-0 flex-1 bg-black">
            <Drawing />
          </div>
        </div>
      </div>

      {/* red callout drawn over the screenshot */}
      <div className="absolute left-[995px] top-[103px] h-[91px] w-[190px] rounded-[5px] border-[13px] border-[#ff0000]" />

      {/* mouse pointer */}
      <svg viewBox="0 0 14 20" className="absolute left-[1096px] top-[147px] h-[20px] w-[14px]">
        <path d="M1 1v14l3.5-3 2.500 6 3-1-2.500-6H12z" fill="#fff" stroke="#000" />
      </svg>
    </div>
  );
}
